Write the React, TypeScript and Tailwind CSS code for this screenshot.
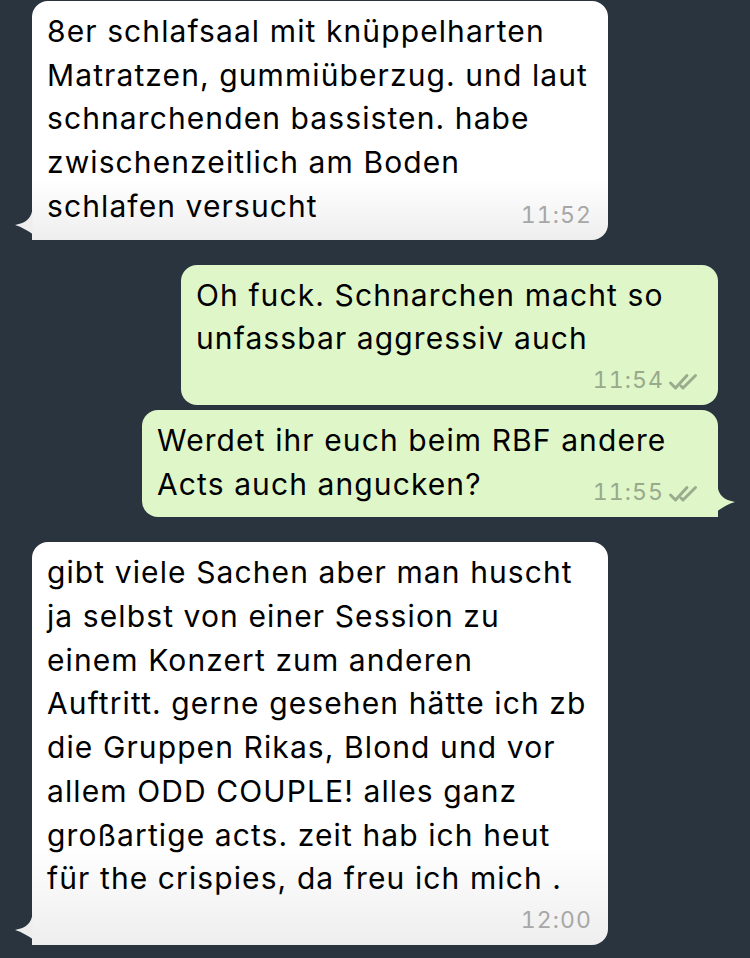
import React from "react";

type Msg = {
  id: number;
  out: boolean;
  lines: string[];
  time: string;
  tail: boolean;
  timeOwnLine: boolean;
  width: string;
};

const messages: Msg[] = [
  {
    id: 1,
    out: false,
    lines: [
      "8er schlafsaal mit knüppelharten",
      "Matratzen, gummiüberzug. und laut",
      "schnarchenden bassisten. habe",
      "zwischenzeitlich am Boden",
      "schlafen versucht",
    ],
    time: "11:52",
    tail: true,
    timeOwnLine: false,
    width: "w-[576px]",
  },
  {
    id: 2,
    out: true,
    lines: ["Oh fuck. Schnarchen macht so", "unfassbar aggressiv auch"],
    time: "11:54",
    tail: false,
    timeOwnLine: true,
    width: "w-[537px]",
  },
  {
    id: 3,
    out: true,
    lines: ["Werdet ihr euch beim RBF andere", "Acts auch angucken?"],
    time: "11:55",
    tail: true,
    timeOwnLine: false,
    width: "w-[576px]",
  },
  {
    id: 4,
    out: false,
    lines: [
      "gibt viele Sachen aber man huscht",
      "ja selbst von einer Session zu",
      "einem Konzert zum anderen",
      "Auftritt. gerne gesehen hätte ich zb",
      "die Gruppen Rikas, Blond und vor",
      "allem ODD COUPLE! alles ganz",
      "großartige acts. zeit hab ich heut",
      "für the crispies, da freu ich mich .",
    ],
    time: "12:00",
    tail: true,
    timeOwnLine: true,
    width: "w-[576px]",
  },
];

function DoubleCheck() {
  return (
    <svg width="32" height="18" viewBox="0 0 32 18" className="ml-[4px] mb-[1px] text-[#9aac8e]">
      <path
        d="M2.5 10 L7.5 15 L19 2.5"
        fill="none"
        stroke="currentColor"
        strokeWidth="3"
        strokeLinecap="round"
        strokeLinejoin="round"
      />
      <path
        d="M13 13 L15 15 L27.5 2.5"
        fill="none"
        stroke="currentColor"
        strokeWidth="3"
        strokeLinecap="round"
        strokeLinejoin="round"
      />
    </svg>
  );
}

function Tail({ out }: { out: boolean }) {
  const fill = out ? "#dff6c9" : "#eeeeee";
  return (
    <svg
      width="30"
      height="40"
      viewBox="0 0 30 40"
      className={`absolute bottom-0 ${out ? "-right-[18px] -scale-x-100" : "-left-[18px]"}`}
    >
      <path d="M18.5 0 V8 C18 18 12 23 1 25 C8 27 14 31 18.5 34 V40 Z" fill={fill} />
    </svg>
  );
}

function Stamp({ msg }: { msg: Msg }) {
  return (
    <span
      className={`flex items-end shrink-0 text-[23px] leading-[23px] tabular-nums ${
        msg.out ? "text-[#98a98c]" : "text-[#a7a7a7]"
      }`}
    >
      {msg.time}
      {msg.out && <DoubleCheck />}
    </span>
  );
}

function Bubble({ msg }: { msg: Msg }) {
  const body = msg.timeOwnLine ? msg.lines : msg.lines.slice(0, -1);
  const last = msg.lines[msg.lines.length - 1];
  return (
    <div className={`flex ${msg.out ? "justify-end pr-[32px]" : "justify-start pl-[32px]"}`}>
      <div
        className={`relative ${msg.width} rounded-[16px] pt-[9px] pb-[11px] ${
          msg.out
            ? "bg-[#dff6c9] pl-[15px] pr-[18px]"
            : "bg-linear-to-b from-white from-75% to-[#eeeeee] pl-[15px] pr-[16px]"
        } ${msg.tail ? (msg.out ? "rounded-br-none" : "rounded-bl-none") : ""}`}
      >
        {msg.tail && <Tail out={msg.out} />}
        <div className="relative text-[30px] leading-[43.7px] text-black tracking-[1.1px]">
          {body.map((l, i) => (
            <div key={i} className="whitespace-nowrap">
              {l}
            </div>
          ))}
          {msg.timeOwnLine ? (
            <div className="flex justify-end items-end h-[33px] pb-[2px]">
              <Stamp msg={msg} />
            </div>
          ) : (
            <div className="flex justify-between items-end">
              <span className="whitespace-nowrap">{last}</span>
              <span className="pb-[2px]">
                <Stamp msg={msg} />
              </span>
            </div>
          )}
        </div>
      </div>
    </div>
  );
}

export default function App() {
  return (
    <div className="min-h-screen bg-[#29343e] pt-[1px] font-['Inter','Noto_Sans',sans-serif] antialiased">
      <div className="flex flex-col">
        {messages.map((m, i) => {
          const prev = messages[i - 1];
          const gap = !prev ? "" : prev.out === m.out ? "mt-[5px]" : "mt-[25px]";
          return (
            <div key={m.id} className={gap}>
              <Bubble msg={m} />
            </div>
          );
        })}
      </div>
    </div>
  );
}
